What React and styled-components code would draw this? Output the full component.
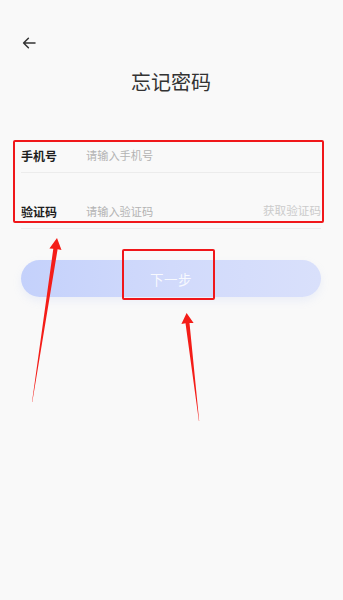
import React from "react";
import styled, { createGlobalStyle } from "styled-components";

const Global = createGlobalStyle`
  html, body { margin: 0; padding: 0; background: #f9f9f9; }
  body { font-family: "Noto Sans CJK SC", "Noto Sans", sans-serif; }
  * { box-sizing: border-box; }
`;

const Page = styled.div`
  position: relative;
  width: 343px;
  height: 600px;
  padding: 0 22px 0 21px;
  background: #f9f9f9;
  overflow: hidden;
`;

const Nav = styled.div`
  display: flex;
  align-items: center;
  padding-top: 37px;
  height: 49px;
`;

const BackBtn = styled.button`
  display: flex;
  padding: 0;
  margin-left: 1px;
  border: 0;
  background: none;
`;

const Title = styled.h1`
  margin: 19px 0 0;
  text-align: center;
  font-size: 20px;
  line-height: 28px;
  font-weight: 400;
  color: #333;
  letter-spacing: 0;
`;

const Form = styled.div`
  position: relative;
  margin-top: 21px;
`;

const Row = styled.label`
  display: flex;
  align-items: flex-end;
  height: 56px;
  padding-bottom: 9px;
  border-bottom: 1px solid #ececec;
`;

const Label = styled.span`
  width: 65px;
  flex: none;
  font-size: 12px;
  line-height: 15px;
  font-weight: 700;
  color: #1e1e1e;
`;

const Input = styled.input`
  flex: 1;
  min-width: 0;
  padding: 0;
  border: 0;
  outline: none;
  background: transparent;
  font-family: inherit;
  font-size: 11.2px;
  line-height: 14px;
  height: 14px;
  margin-bottom: 1px;
  color: #333;
  &::placeholder { color: #b3b3b3; }
`;

const CodeLink = styled.span`
  flex: none;
  font-size: 11.6px;
  line-height: 14px;
  margin-bottom: 2px;
  color: #cbcbcb;
`;

const Highlight = styled.div`
  position: absolute;
  border: 2px solid #f0171a;
  border-radius: 2px;
  pointer-events: none;
`;

const ButtonWrap = styled.div`
  position: relative;
  margin-top: 31px;
`;

const NextButton = styled.button`
  display: block;
  width: 100%;
  height: 37px;
  border: 0;
  border-radius: 19px;
  background: linear-gradient(90deg, #c4d1fb 0%, #d1dafb 50%, #d9e0fb 100%);
  box-shadow: 0 4px 8px rgba(160, 178, 240, 0.15);
  font-family: inherit;
  font-size: 13.5px;
  color: rgba(255, 255, 255, 0.85);
  letter-spacing: 0.5px;
`;

const Arrows = styled.svg`
  position: absolute;
  left: 0;
  top: 0;
  pointer-events: none;
`;

export default function App() {
  return (
    <>
      <Global />
      <Page>
        <Nav>
          <BackBtn aria-label="back">
            <svg width="14" height="12" viewBox="0 0 14 12" fill="none">
              <path d="M13 6H1.6M6.4 1.2L1.6 6l4.8 4.8" stroke="#333" strokeWidth="1.5" strokeLinecap="round" strokeLinejoin="round" />
            </svg>
          </BackBtn>
        </Nav>
        <Title>忘记密码</Title>
        <Form>
          <Row>
            <Label>手机号</Label>
            <Input placeholder="请输入手机号" />
          </Row>
          <Row>
            <Label>验证码</Label>
            <Input placeholder="请输入验证码" />
            <CodeLink>获取验证码</CodeLink>
          </Row>
          <Highlight style={{ left: -8, top: 23, width: 311, height: 83 }} />
        </Form>
        <ButtonWrap>
          <NextButton>下一步</NextButton>
          <Highlight style={{ left: 101, top: -11, width: 93, height: 51 }} />
        </ButtonWrap>
        <Arrows width="343" height="600" viewBox="0 0 343 600">
          <polygon points="57,238 61.5,250 57.6,249.3 32.3,402 32,402 53.3,248.7 49.4,248.6" fill="#f41d18" />
          <polygon points="186.6,313 193.6,323 189.5,322.9 199.2,421 198.9,421 185.5,323.3 181.4,324" fill="#f41d18" />
        </Arrows>
      </Page>
    </>
  );
}
